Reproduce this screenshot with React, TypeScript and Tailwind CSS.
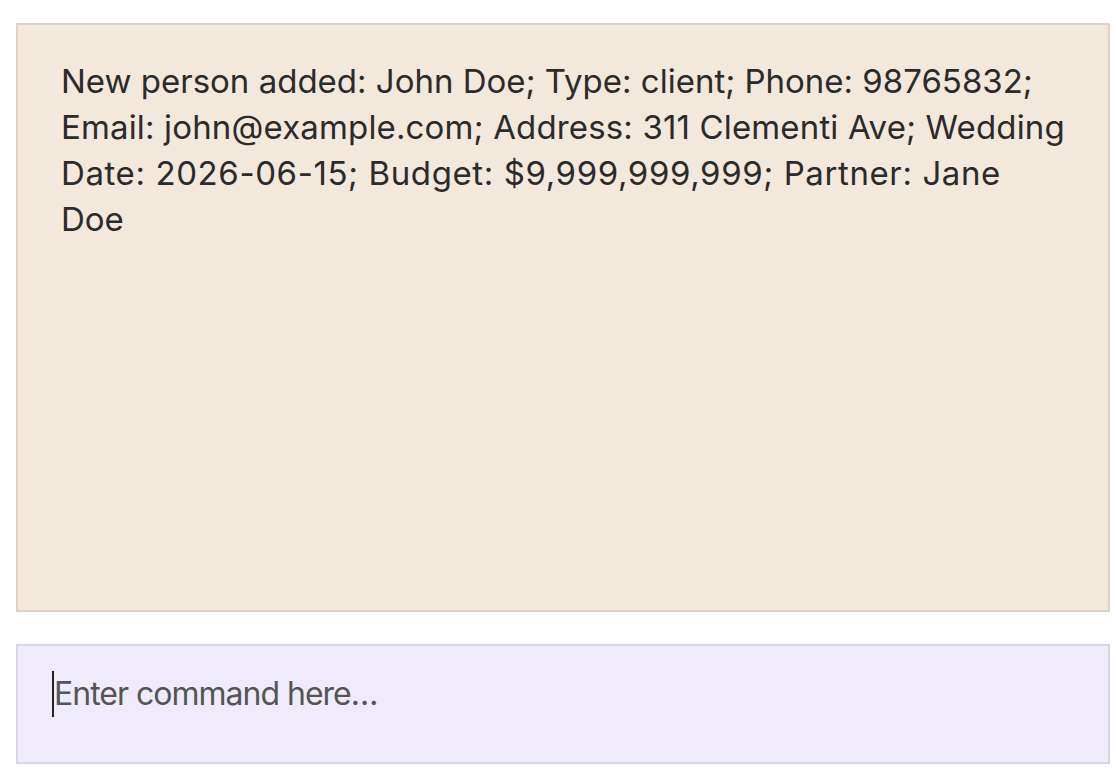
const lines = [
  { text: "New person added: John Doe; Type: client; Phone: 98765832;", track: "tracking-normal" },
  { text: "Email: john@example.com; Address: 311 Clementi Ave; Wedding", track: "tracking-[0.15px]" },
  { text: "Date: 2026-06-15; Budget: $9,999,999,999; Partner: Jane", track: "tracking-[0.6px]" },
  { text: "Doe", track: "tracking-normal" },
];

export default function App() {
  return (
    <div className="w-[1116px] h-[776px] bg-white pt-[23px] pl-4 pr-[6px] font-['Inter','Noto_Sans',sans-serif]">
      <div className="h-[589px] border-2 border-[#ddd2c5] bg-[#f3e8dc] pl-[43px] pr-[20px] pt-[33px]">
        <p className="text-[33px] leading-[46px] text-[#2b2b2b]">
          {lines.map((l) => (
            <span key={l.text} className={`block whitespace-nowrap ${l.track}`}>
              {l.text}
            </span>
          ))}
        </p>
      </div>

      <div className="mt-[32px] h-[120px] border-2 border-[#d9d5e6] bg-[#efebfb] pl-[34px] pt-[25px]">
        <div className="flex items-center">
          <span className="w-[2px] h-[46px] bg-[#222]" />
          <span className="text-[32px] leading-[46px] tracking-[-1px] text-[#555555]">Enter command here…</span>
        </div>
      </div>
    </div>
  );
}
